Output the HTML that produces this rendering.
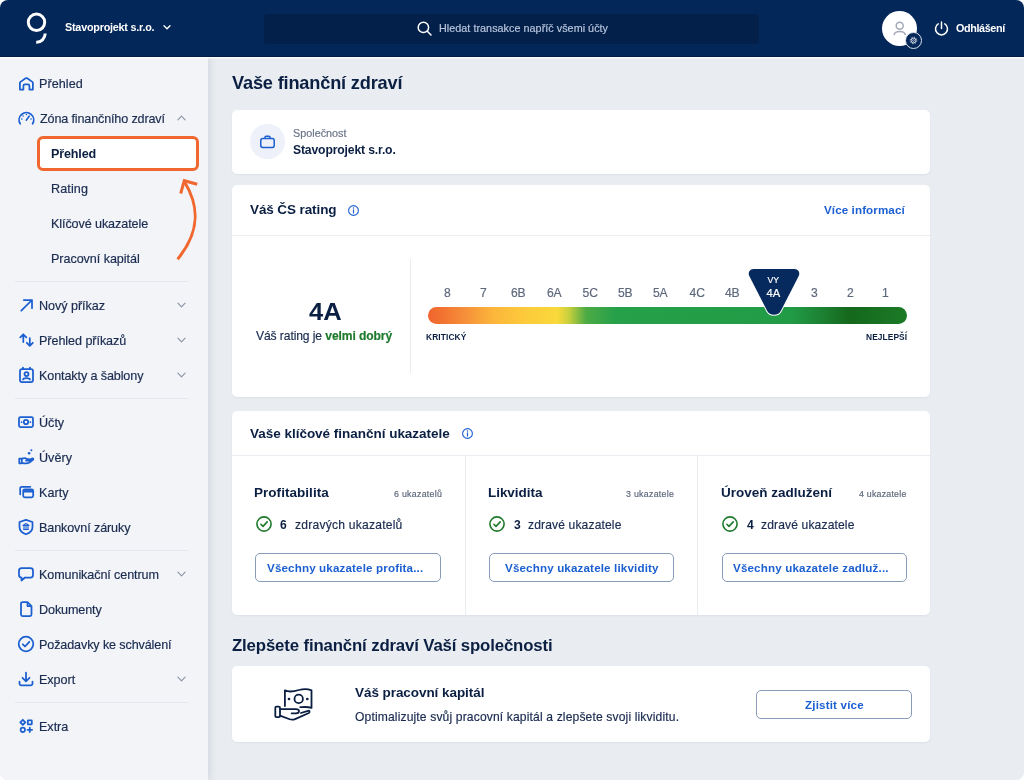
<!DOCTYPE html>
<html lang="cs">
<head>
<meta charset="utf-8">
<title>Vaše finanční zdraví</title>
<style>
*{box-sizing:border-box;margin:0;padding:0}
html,body{width:1024px;height:780px;overflow:hidden;background:#fff}
body{font-family:"Liberation Sans",sans-serif;color:#0b1f42}
.app{position:absolute;left:0;top:0;width:1024px;height:780px;border-radius:8px;overflow:hidden;background:#e9edf1}
.abs{position:absolute}
.tx{position:absolute;white-space:nowrap;z-index:6;will-change:transform}
.hdr{position:absolute;left:0;top:0;width:1024px;height:56.500px;background:#032758;border-bottom:1px solid #021c44;box-shadow:0 1.500px 0 rgba(255,255,255,.75);z-index:5}
.search{position:absolute;left:264.300px;top:13.500px;width:495px;height:30px;border-radius:4px;background:#03204a}
.avatar{position:absolute;left:882px;top:10.5px;width:35px;height:35px;border-radius:50%;background:#fff}
.gear{position:absolute;left:904.700px;top:32.400px;width:17px;height:17px;border-radius:50%;background:#032758;border:1.2px solid #dfe5ef}
.side{position:absolute;left:0;top:57px;width:208px;height:723px;background:#f2f4f8;box-shadow:1px 0 8px rgba(30,50,90,.14);z-index:3}
svg.ic{position:absolute;left:16.600px;width:18px;height:18px;fill:none;stroke:#1b5fd0;stroke-width:1.750;stroke-linecap:round;stroke-linejoin:round;z-index:6}
svg.ch{position:absolute;left:176px;width:11px;height:8px;fill:none;stroke:#8b94a6;stroke-width:1.150;stroke-linecap:round;stroke-linejoin:round;z-index:6}
.dv{position:absolute;left:15px;width:173px;height:1px;background:#e4e7ee;z-index:6}
.act{position:absolute;left:37.4px;top:136.4px;width:161.700px;height:34.400px;border:3px solid #f0682f;border-radius:6px;background:#fff;z-index:5}
.card{position:absolute;left:232px;width:698px;background:#fff;border-radius:5px;box-shadow:0 1px 2px rgba(20,40,80,.06)}
.ln{position:absolute;background:#e9ecf1;z-index:6}
.btn{position:absolute;border:1.400px solid #8a9bb8;border-radius:5px;background:#fff}
</style>
</head>
<body>
<div class="app">
<div class="hdr">
  <svg class="abs" style="left:24px;top:10px" width="26" height="36" viewBox="0 0 26 36"><circle cx="12.5" cy="12.3" r="8.2" fill="none" stroke="#fff" stroke-width="3"/><path d="M21.2 23.6 A8.7 8.7 0 0 1 12.2 32.2" fill="none" stroke="#fff" stroke-width="3"/></svg>
  <svg class="abs" style="left:162px;top:24px" width="10" height="7" viewBox="0 0 10 7"><path d="M2 1.8 L5 4.8 L8 1.8" fill="none" stroke="#fff" stroke-width="1.4" stroke-linecap="round" stroke-linejoin="round"/></svg>
  <div class="search"></div>
  <svg class="abs" style="left:416px;top:19.5px" width="18" height="18" viewBox="0 0 18 18"><circle cx="7.4" cy="7.4" r="5.2" fill="none" stroke="#fff" stroke-width="1.5"/><path d="M11.3 11.3 L15 15" stroke="#fff" stroke-width="1.5" stroke-linecap="round"/></svg>
  <div class="avatar"></div>
  <svg class="abs" style="left:890.5px;top:18px" width="18" height="20" viewBox="0 0 18 20"><circle cx="8.7" cy="7.8" r="3.5" fill="none" stroke="#a2a9b6" stroke-width="1.5"/><path d="M3.2 16.6 C4.2 12.6 13.2 12.6 14.2 16.6" fill="none" stroke="#a2a9b6" stroke-width="1.5" stroke-linecap="round"/></svg>
  <div class="gear"></div>
  <svg class="abs" style="left:907.700px;top:35.400px" width="11" height="11" viewBox="0 0 11 11"><circle cx="5.5" cy="5.5" r="3.3" fill="none" stroke="#e3e8f0" stroke-width="1" stroke-dasharray="1.1 1.492"/><circle cx="5.5" cy="5.5" r="2.4" fill="none" stroke="#e3e8f0" stroke-width=".9"/><circle cx="5.5" cy="5.5" r=".9" fill="none" stroke="#e3e8f0" stroke-width=".7"/></svg>
  <svg class="abs" style="left:933.2px;top:20px" width="17" height="17" viewBox="0 0 17 17"><path d="M5.2 3.9 A6 6 0 1 0 11.8 3.9" fill="none" stroke="#fff" stroke-width="1.5" stroke-linecap="round"/><path d="M8.5 2 V8.4" stroke="#fff" stroke-width="1.5" stroke-linecap="round"/></svg>
</div>
<div class="tx" id="co" style="left:64.63px;top:19.00px;font-size:10.8px;line-height:16px;font-weight:700;color:#fff;letter-spacing:-0.222px;"><span>Stavoprojekt s.r.o.</span></div>
<div class="tx" id="ph" style="left:438.74px;top:20.00px;font-size:10.8px;line-height:16px;font-weight:400;color:#b9c6de;letter-spacing:0.030px;-webkit-text-stroke:.18px;"><span>Hledat transakce napříč všemi účty</span></div>
<div class="tx" id="lo" style="left:955.59px;top:20.00px;font-size:10.8px;line-height:16px;font-weight:700;color:#fff;letter-spacing:-0.380px;"><span>Odhlášení</span></div>
<div class="side"></div>
<div class="act"></div>
<div class="tx" id="s0" style="left:39.06px;top:75.00px;font-size:12.6px;line-height:18px;font-weight:400;color:#1a2b4f;letter-spacing:0.054px;-webkit-text-stroke:.18px;"><span>Přehled</span></div>
<svg class="ic" style="top:74px" viewBox="0 0 18 18"><path d="M2.9 9.2 Q2.9 8.4 3.5 7.9 L8.6 4.3 Q9.4 3.8 10.2 4.3 L15.3 7.9 Q15.9 8.4 15.9 9.2 V15.6 H12.4 V11.9 Q12.4 10.4 10.9 10.4 H7.9 Q6.4 10.4 6.4 11.9 V15.6 H2.9 Z"/></svg>
<div class="tx" id="s1" style="left:39.65px;top:110.00px;font-size:12.6px;line-height:18px;font-weight:400;color:#1a2b4f;letter-spacing:-0.151px;-webkit-text-stroke:.18px;"><span>Zóna finančního zdraví</span></div>
<svg class="ic" style="top:109px" viewBox="0 0 18 18"><path d="M3.2 14.8 A7.3 7.3 0 1 1 15.6 14.8"/><path d="M9.3 11.3 L12.3 7" stroke-width="1.5"/><path d="M4.7 10 H4.8 M6 7 H6.1 M9.4 5.5 H9.5 M14 10 H14.1" stroke-width="1.5"/></svg>
<svg class="ch" style="top:114px" viewBox="0 0 11 8"><path d="M1.9 5.8 L5.5 2.2 L9.1 5.8"/></svg>
<div class="tx" id="s2" style="left:51.16px;top:145.00px;font-size:12.6px;line-height:18px;font-weight:700;color:#0b1f42;letter-spacing:-0.173px;"><span>Přehled</span></div>
<div class="tx" id="s3" style="left:51.00px;top:180.00px;font-size:12.6px;line-height:18px;font-weight:400;color:#1a2b4f;letter-spacing:0.112px;-webkit-text-stroke:.18px;"><span>Rating</span></div>
<div class="tx" id="s4" style="left:50.98px;top:215.00px;font-size:12.6px;line-height:18px;font-weight:400;color:#1a2b4f;letter-spacing:-0.098px;-webkit-text-stroke:.18px;"><span>Klíčové ukazatele</span></div>
<div class="tx" id="s5" style="left:50.97px;top:250.00px;font-size:12.6px;line-height:18px;font-weight:400;color:#1a2b4f;letter-spacing:-0.058px;-webkit-text-stroke:.18px;"><span>Pracovní kapitál</span></div>
<div class="tx" id="s6" style="left:38.97px;top:297.00px;font-size:12.6px;line-height:18px;font-weight:400;color:#1a2b4f;letter-spacing:-0.042px;-webkit-text-stroke:.18px;"><span>Nový příkaz</span></div>
<svg class="ic" style="top:296px" viewBox="0 0 18 18"><path d="M4.3 14.7 L15 4 M6.8 4 H15 V12.2"/></svg>
<svg class="ch" style="top:301px" viewBox="0 0 11 8"><path d="M1.9 2.2 L5.5 5.8 L9.1 2.2"/></svg>
<div class="tx" id="s7" style="left:39.04px;top:332.00px;font-size:12.6px;line-height:18px;font-weight:400;color:#1a2b4f;letter-spacing:-0.065px;-webkit-text-stroke:.18px;"><span>Přehled příkazů</span></div>
<svg class="ic" style="top:331px" viewBox="0 0 18 18"><path d="M6.3 11 V3.3 M3.3 6.3 L6.3 3.3 L9.3 6.3 M12.8 7 V14.8 M9.8 11.8 L12.8 14.8 L15.8 11.8"/></svg>
<svg class="ch" style="top:336px" viewBox="0 0 11 8"><path d="M1.9 2.2 L5.5 5.8 L9.1 2.2"/></svg>
<div class="tx" id="s8" style="left:38.89px;top:367.00px;font-size:12.6px;line-height:18px;font-weight:400;color:#1a2b4f;letter-spacing:-0.116px;-webkit-text-stroke:.18px;"><span>Kontakty a šablony</span></div>
<svg class="ic" style="top:366px" viewBox="0 0 18 18"><rect x="3" y="3" width="13" height="13" rx="2"/><path d="M6 1.5 V3 M13 1.5 V3"/><circle cx="9.5" cy="8" r="2"/><path d="M6 13.5 C6.5 11.5 12.5 11.5 13 13.5"/></svg>
<svg class="ch" style="top:371px" viewBox="0 0 11 8"><path d="M1.9 2.2 L5.5 5.8 L9.1 2.2"/></svg>
<div class="tx" id="s9" style="left:39.32px;top:414.00px;font-size:12.6px;line-height:18px;font-weight:400;color:#1a2b4f;letter-spacing:-0.006px;-webkit-text-stroke:.18px;"><span>Účty</span></div>
<svg class="ic" style="top:413px" viewBox="0 0 18 18"><rect x="2" y="4" width="14" height="10" rx="1.5"/><circle cx="9" cy="9" r="2.2"/><path d="M4.6 9 H4.7 M13.3 9 H13.4"/></svg>
<div class="tx" id="s10" style="left:39.08px;top:449.00px;font-size:12.6px;line-height:18px;font-weight:400;color:#1a2b4f;letter-spacing:0.012px;-webkit-text-stroke:.18px;"><span>Úvěry</span></div>
<svg class="ic" style="top:448px" viewBox="0 0 18 18"><circle cx="14.4" cy="2.3" r="1" fill="#1b5fd0" stroke="none"/><circle cx="12.1" cy="5.3" r="1.3" fill="#1b5fd0" stroke="none"/><path d="M2.3 10.5 H4.8 V15.3 H2.3 Z M4.8 11 C7 9.5 8.5 10 10 11 H12 C13 11 13 12.5 12 12.5 H9 M12.5 12 L15 10.5 C16 10 16.8 11 16 11.8 L12 14.8 C10 15.8 7 15.3 4.8 14.8"/></svg>
<div class="tx" id="s11" style="left:38.98px;top:484.00px;font-size:12.6px;line-height:18px;font-weight:400;color:#1a2b4f;letter-spacing:0.050px;-webkit-text-stroke:.18px;"><span>Karty</span></div>
<svg class="ic" style="top:483px" viewBox="0 0 18 18"><path d="M3.2 11.3 V5.3 A1.5 1.5 0 0 1 4.7 3.8 H13.3"/><rect x="6.2" y="6.3" width="10" height="8" rx="1.6"/><path d="M6.2 8.3 H16.2" stroke-width="2.4" stroke-linecap="butt"/></svg>
<div class="tx" id="s12" style="left:38.90px;top:519.00px;font-size:12.6px;line-height:18px;font-weight:400;color:#1a2b4f;letter-spacing:-0.117px;-webkit-text-stroke:.18px;"><span>Bankovní záruky</span></div>
<svg class="ic" style="top:518px" viewBox="0 0 18 18"><path d="M9 1.8 L15.5 4 V9 C15.5 12.5 12.5 15 9 16.3 C5.5 15 2.5 12.5 2.5 9 V4 Z"/><path d="M6.5 11.5 H11.5 M7 11 V8 M9 11 V8 M11 11 V8 M6 7.5 L9 5.5 L12 7.5 Z" stroke-width="1.1"/></svg>
<div class="tx" id="s13" style="left:38.90px;top:566.00px;font-size:12.6px;line-height:18px;font-weight:400;color:#1a2b4f;letter-spacing:-0.102px;-webkit-text-stroke:.18px;"><span>Komunikační centrum</span></div>
<svg class="ic" style="top:565px" viewBox="0 0 18 18"><path d="M4.5 3 H13.5 A2.5 2.5 0 0 1 16 5.5 V10 A2.5 2.5 0 0 1 13.5 12.5 H8 L4.5 15.5 V12.5 A2.5 2.5 0 0 1 2 10 V5.5 A2.5 2.5 0 0 1 4.5 3 Z"/></svg>
<svg class="ch" style="top:570px" viewBox="0 0 11 8"><path d="M1.9 2.2 L5.5 5.8 L9.1 2.2"/></svg>
<div class="tx" id="s14" style="left:39.06px;top:601.00px;font-size:12.6px;line-height:18px;font-weight:400;color:#1a2b4f;letter-spacing:-0.111px;-webkit-text-stroke:.18px;"><span>Dokumenty</span></div>
<svg class="ic" style="top:600px" viewBox="0 0 18 18"><path d="M4 3.5 A1.5 1.5 0 0 1 5.5 2 H10.5 L14.5 6 V14.5 A1.5 1.5 0 0 1 13 16 H5.5 A1.5 1.5 0 0 1 4 14.5 Z M10.5 2 V6 H14.5"/></svg>
<div class="tx" id="s15" style="left:38.92px;top:636.00px;font-size:12.6px;line-height:18px;font-weight:400;color:#1a2b4f;letter-spacing:-0.122px;-webkit-text-stroke:.18px;"><span>Požadavky ke schválení</span></div>
<svg class="ic" style="top:635px" viewBox="0 0 18 18"><circle cx="9" cy="9" r="7.3"/><path d="M5.8 9.3 L8 11.5 L12.3 6.8"/></svg>
<div class="tx" id="s16" style="left:39.01px;top:671.00px;font-size:12.6px;line-height:18px;font-weight:400;color:#1a2b4f;letter-spacing:-0.050px;-webkit-text-stroke:.18px;"><span>Export</span></div>
<svg class="ic" style="top:670px" viewBox="0 0 18 18"><path d="M9 2.5 V11 M5.5 7.8 L9 11.3 L12.5 7.8 M2.5 11.5 V13.5 A1.8 1.8 0 0 0 4.3 15.3 H13.7 A1.8 1.8 0 0 0 15.5 13.5 V11.5"/></svg>
<svg class="ch" style="top:675px" viewBox="0 0 11 8"><path d="M1.9 2.2 L5.5 5.8 L9.1 2.2"/></svg>
<div class="tx" id="s17" style="left:39.04px;top:718.00px;font-size:12.6px;line-height:18px;font-weight:400;color:#1a2b4f;letter-spacing:-0.034px;-webkit-text-stroke:.18px;"><span>Extra</span></div>
<svg class="ic" style="top:717px" viewBox="0 0 18 18"><path d="M5.8 2.8 L8.3 5.3 L5.8 7.8 L3.3 5.3 Z"/><rect x="10.8" y="3.3" width="4" height="4" rx=".4"/><circle cx="5.8" cy="12.8" r="2.2"/><path d="M12.8 10.5 V15.1 M10.5 12.8 H15.1"/></svg>
<div class="dv" style="top:281px"></div>
<div class="dv" style="top:398px"></div>
<div class="dv" style="top:550px"></div>
<div class="dv" style="top:702px"></div>
<svg class="abs" style="left:168px;top:175px;z-index:6" width="36" height="90" viewBox="0 0 36 90"><path d="M9.6 84.2 C32 57 32 32 16.3 6.5" fill="none" stroke="#f0682f" stroke-width="3"/><path d="M12.7 18.5 L16.3 5.7 L29.2 9.3" fill="none" stroke="#f0682f" stroke-width="3" stroke-linejoin="miter"/></svg>
<div class="tx" id="h1" style="left:232.25px;top:71.00px;font-size:18.2px;line-height:24px;font-weight:700;color:#0b1f42;letter-spacing:-0.178px;"><span>Vaše finanční zdraví</span></div>
<div class="card" style="top:109.5px;height:64px"></div>
<div class="abs" style="left:250.3px;top:124.4px;width:34.400px;height:34.400px;border-radius:50%;background:#eef1fa"></div>
<svg class="abs" style="left:259.2px;top:133.5px" width="17" height="15" viewBox="0 0 17 15"><rect x="1.8" y="4.6" width="13.4" height="8.8" rx="1.8" fill="none" stroke="#1b5fd0" stroke-width="1.5"/><path d="M6 4.4 V3.2 A1 1 0 0 1 7 2.2 H10 A1 1 0 0 1 11 3.2 V4.4" fill="none" stroke="#1b5fd0" stroke-width="1.5"/></svg>
<div class="tx" id="spol" style="left:293.40px;top:125.00px;font-size:10.8px;line-height:16px;font-weight:400;color:#687386;letter-spacing:0.011px;-webkit-text-stroke:.18px;"><span>Společnost</span></div>
<div class="tx" id="stavo" style="left:293.31px;top:141.00px;font-size:12.2px;line-height:18px;font-weight:700;color:#0b1f42;letter-spacing:-0.160px;"><span>Stavoprojekt s.r.o.</span></div>
<div class="card" style="top:185px;height:212px"></div>
<div class="tx" id="cs" style="left:249.78px;top:200.00px;font-size:13.5px;line-height:19px;font-weight:700;color:#0b1f42;letter-spacing:-0.105px;"><span>Váš ČS rating</span></div>
<svg class="abs" style="left:346.8px;top:203.5px" width="13" height="13" viewBox="0 0 13 13"><circle cx="6.5" cy="6.5" r="4.9" fill="none" stroke="#1b5fd0" stroke-width="1.1"/><path d="M6.5 5.9 V8.9" stroke="#1b5fd0" stroke-width="1.2" stroke-linecap="round"/><circle cx="6.5" cy="4.1" r=".75" fill="#1b5fd0"/></svg>
<div class="tx" id="vice" style="left:824.43px;top:202.00px;font-size:11.6px;line-height:16px;font-weight:700;color:#1b5fd0;letter-spacing:0.109px;"><span>Více informací</span></div>
<div class="ln" style="left:232px;top:235px;width:698px;height:1px"></div>
<div class="ln" style="left:410px;top:259px;width:1px;height:114px"></div>
<div class="tx" id="big" style="left:308.63px;top:297.00px;font-size:23.5px;line-height:30px;font-weight:700;color:#0b1f42;letter-spacing:0.000px;transform:scaleX(1.088);transform-origin:0 0;"><span>4A</span></div>
<div class="tx" id="rat" style="left:255.75px;top:327.00px;font-size:12.1px;line-height:18px;font-weight:400;color:#1a2b4f;letter-spacing:-0.096px;-webkit-text-stroke:.18px;"><span>Váš rating je <b style="color:#1e7a2c">velmi dobrý</b></span></div>
<div class="tx" id="l0" style="left:424.32px;width:46.60px;text-align:center;top:284.00px;font-size:12.1px;line-height:18px;font-weight:400;color:#5d687c;letter-spacing:0.000px;-webkit-text-stroke:.18px;"><span>8</span></div>
<div class="tx" id="l1" style="left:460.32px;width:46.60px;text-align:center;top:284.00px;font-size:12.1px;line-height:18px;font-weight:400;color:#5d687c;letter-spacing:0.000px;-webkit-text-stroke:.18px;"><span>7</span></div>
<div class="tx" id="l2" style="left:491.48px;width:54.60px;text-align:center;top:284.00px;font-size:12.1px;line-height:18px;font-weight:400;color:#5d687c;letter-spacing:0.000px;-webkit-text-stroke:.18px;"><span>6B</span></div>
<div class="tx" id="l3" style="left:527.18px;width:54.60px;text-align:center;top:284.00px;font-size:12.1px;line-height:18px;font-weight:400;color:#5d687c;letter-spacing:0.000px;-webkit-text-stroke:.18px;"><span>6A</span></div>
<div class="tx" id="l4" style="left:562.50px;width:54.60px;text-align:center;top:284.00px;font-size:12.1px;line-height:18px;font-weight:400;color:#5d687c;letter-spacing:0.000px;-webkit-text-stroke:.18px;"><span>5C</span></div>
<div class="tx" id="l5" style="left:598.43px;width:54.60px;text-align:center;top:284.00px;font-size:12.1px;line-height:18px;font-weight:400;color:#5d687c;letter-spacing:0.000px;-webkit-text-stroke:.18px;"><span>5B</span></div>
<div class="tx" id="l6" style="left:633.14px;width:54.60px;text-align:center;top:284.00px;font-size:12.1px;line-height:18px;font-weight:400;color:#5d687c;letter-spacing:0.000px;-webkit-text-stroke:.18px;"><span>5A</span></div>
<div class="tx" id="l7" style="left:669.76px;width:54.60px;text-align:center;top:284.00px;font-size:12.1px;line-height:18px;font-weight:400;color:#5d687c;letter-spacing:0.000px;-webkit-text-stroke:.18px;"><span>4C</span></div>
<div class="tx" id="l8" style="left:704.66px;width:54.60px;text-align:center;top:284.00px;font-size:12.1px;line-height:18px;font-weight:400;color:#5d687c;letter-spacing:0.000px;-webkit-text-stroke:.18px;"><span>4B</span></div>
<div class="tx" id="l9" style="left:791.28px;width:46.60px;text-align:center;top:284.00px;font-size:12.1px;line-height:18px;font-weight:400;color:#5d687c;letter-spacing:0.000px;-webkit-text-stroke:.18px;"><span>3</span></div>
<div class="tx" id="l10" style="left:827.32px;width:46.60px;text-align:center;top:284.00px;font-size:12.1px;line-height:18px;font-weight:400;color:#5d687c;letter-spacing:0.000px;-webkit-text-stroke:.18px;"><span>2</span></div>
<div class="tx" id="l11" style="left:862.17px;width:46.60px;text-align:center;top:284.00px;font-size:12.1px;line-height:18px;font-weight:400;color:#5d687c;letter-spacing:0.000px;-webkit-text-stroke:.18px;"><span>1</span></div>
<div class="abs" style="left:427.5px;top:307px;width:479.500px;height:17px;border-radius:9px;background:linear-gradient(90deg,#f0652e 0%,#f27331 3%,#f6913a 8%,#fbb53b 13.5%,#fdca3b 20%,#f9d93a 27%,#c5cf3d 29.5%,#4dab45 33%,#27a04a 39%,#229b46 76%,#1c8233 82%,#15681c 88%,#1b7a26 100%)"></div>
<svg class="abs" style="left:743px;top:264px;z-index:6" width="62" height="56" viewBox="0 0 62 56"><clipPath id="cp"><rect x="0" y="42.8" width="62" height="14"/></clipPath><path clip-path="url(#cp)" d="M55.73 11.91 L38.03 46.50 A7.90 7.90 0 0 1 23.97 46.50 L6.27 11.91" fill="none" stroke="#fff" stroke-width="2"/><path d="M10.50 5 H51.50 A4.75 4.75 0 0 1 55.73 11.91 L38.03 46.50 A7.90 7.90 0 0 1 23.97 46.50 L6.27 11.91 A4.75 4.75 0 0 1 10.50 5 Z" fill="#062a5e"/></svg>
<div class="tx" id="vy" style="left:748.02px;width:50.70px;text-align:center;top:273.00px;font-size:8.8px;line-height:14px;font-weight:400;color:#fff;letter-spacing:0.000px;-webkit-text-stroke:.18px;"><span>VY</span></div>
<div class="tx" id="m4a" style="left:745.92px;width:54.50px;text-align:center;top:285.00px;font-size:11.2px;line-height:16px;font-weight:400;color:#fff;letter-spacing:0.000px;-webkit-text-stroke:.18px;"><span>4A</span></div>
<div class="tx" id="krit" style="left:426.46px;top:330.00px;font-size:8.4px;line-height:14px;font-weight:700;color:#0b1f42;letter-spacing:0.105px;"><span>KRITICKÝ</span></div>
<div class="tx" id="nej" style="right:116.59px;top:330.00px;font-size:8.4px;line-height:14px;font-weight:700;color:#0b1f42;letter-spacing:0.088px;"><span>NEJLEPŠÍ</span></div>
<div class="card" style="top:411.200px;height:204.200px"></div>
<div class="tx" id="kl" style="left:250.37px;top:424.00px;font-size:13.5px;line-height:19px;font-weight:700;color:#0b1f42;letter-spacing:-0.019px;"><span>Vaše klíčové finanční ukazatele</span></div>
<svg class="abs" style="left:461px;top:427px" width="13" height="13" viewBox="0 0 13 13"><circle cx="6.5" cy="6.5" r="4.9" fill="none" stroke="#1b5fd0" stroke-width="1.1"/><path d="M6.5 5.9 V8.9" stroke="#1b5fd0" stroke-width="1.2" stroke-linecap="round"/><circle cx="6.5" cy="4.1" r=".75" fill="#1b5fd0"/></svg>
<div class="ln" style="left:232px;top:455px;width:698px;height:1px"></div>
<div class="ln" style="left:464.700px;top:456px;width:1px;height:159.500px"></div>
<div class="ln" style="left:697.300px;top:456px;width:1px;height:159.500px"></div>
<div class="tx" id="ct0" style="left:254.36px;top:483.00px;font-size:13.5px;line-height:19px;font-weight:700;color:#0b1f42;letter-spacing:0.039px;"><span>Profitabilita</span></div>
<div class="tx" id="cn0" style="right:582.24px;top:487.00px;font-size:8.8px;line-height:14px;font-weight:400;color:#5d687c;letter-spacing:0.287px;-webkit-text-stroke:.18px;"><span>6 ukazatelů</span></div>
<svg class="abs" style="left:254.8px;top:515.2px" width="18" height="18" viewBox="0 0 18 18"><circle cx="9" cy="9" r="7.1" fill="none" stroke="#1e7a2c" stroke-width="1.6"/><path d="M5.9 9.3 L8 11.4 L12.2 6.9" fill="none" stroke="#1e7a2c" stroke-width="1.6" stroke-linecap="round" stroke-linejoin="round"/></svg>
<div class="tx" id="n0" style="left:280.07px;top:516.00px;font-size:12.1px;line-height:18px;font-weight:700;color:#0b1f42;letter-spacing:0.000px;"><span>6</span></div>
<div class="tx" id="hl0" style="left:294.65px;top:516.00px;font-size:12.1px;line-height:18px;font-weight:400;color:#1a2b4f;letter-spacing:0.222px;-webkit-text-stroke:.18px;"><span>zdravých ukazatelů</span></div>
<div class="btn" style="left:255.2px;top:553.3px;width:185.9px;height:28.900px"></div>
<div class="tx" id="b0" style="left:267.42px;top:560.00px;font-size:11.6px;line-height:16px;font-weight:700;color:#1b5fd0;letter-spacing:0.151px;"><span>Všechny ukazatele profita...</span></div>
<div class="tx" id="ct1" style="left:488.35px;top:483.00px;font-size:13.5px;line-height:19px;font-weight:700;color:#0b1f42;letter-spacing:-0.047px;"><span>Likvidita</span></div>
<div class="tx" id="cn1" style="right:349.77px;top:487.00px;font-size:8.8px;line-height:14px;font-weight:400;color:#5d687c;letter-spacing:0.290px;-webkit-text-stroke:.18px;"><span>3 ukazatele</span></div>
<svg class="abs" style="left:488.3px;top:515.2px" width="18" height="18" viewBox="0 0 18 18"><circle cx="9" cy="9" r="7.1" fill="none" stroke="#1e7a2c" stroke-width="1.6"/><path d="M5.9 9.3 L8 11.4 L12.2 6.9" fill="none" stroke="#1e7a2c" stroke-width="1.6" stroke-linecap="round" stroke-linejoin="round"/></svg>
<div class="tx" id="n1" style="left:513.94px;top:516.00px;font-size:12.1px;line-height:18px;font-weight:700;color:#0b1f42;letter-spacing:0.000px;"><span>3</span></div>
<div class="tx" id="hl1" style="left:527.82px;top:516.00px;font-size:12.1px;line-height:18px;font-weight:400;color:#1a2b4f;letter-spacing:0.130px;-webkit-text-stroke:.18px;"><span>zdravé ukazatele</span></div>
<div class="btn" style="left:488.7px;top:553.3px;width:185.2px;height:28.900px"></div>
<div class="tx" id="b1" style="left:505.22px;top:560.00px;font-size:11.6px;line-height:16px;font-weight:700;color:#1b5fd0;letter-spacing:0.153px;"><span>Všechny ukazatele likvidity</span></div>
<div class="tx" id="ct2" style="left:720.76px;top:483.00px;font-size:13.5px;line-height:19px;font-weight:700;color:#0b1f42;letter-spacing:-0.007px;"><span>Úroveň zadlužení</span></div>
<div class="tx" id="cn2" style="right:117.53px;top:487.00px;font-size:8.8px;line-height:14px;font-weight:400;color:#5d687c;letter-spacing:0.229px;-webkit-text-stroke:.18px;"><span>4 ukazatele</span></div>
<svg class="abs" style="left:720.9px;top:515.2px" width="18" height="18" viewBox="0 0 18 18"><circle cx="9" cy="9" r="7.1" fill="none" stroke="#1e7a2c" stroke-width="1.6"/><path d="M5.9 9.3 L8 11.4 L12.2 6.9" fill="none" stroke="#1e7a2c" stroke-width="1.6" stroke-linecap="round" stroke-linejoin="round"/></svg>
<div class="tx" id="n2" style="left:746.89px;top:516.00px;font-size:12.1px;line-height:18px;font-weight:700;color:#0b1f42;letter-spacing:0.000px;"><span>4</span></div>
<div class="tx" id="hl2" style="left:761.42px;top:516.00px;font-size:12.1px;line-height:18px;font-weight:400;color:#1a2b4f;letter-spacing:0.130px;-webkit-text-stroke:.18px;"><span>zdravé ukazatele</span></div>
<div class="btn" style="left:721.6px;top:553.3px;width:185.1px;height:28.900px"></div>
<div class="tx" id="b2" style="left:732.88px;top:560.00px;font-size:11.6px;line-height:16px;font-weight:700;color:#1b5fd0;letter-spacing:0.158px;"><span>Všechny ukazatele zadluž...</span></div>
<div class="tx" id="h2" style="left:231.91px;top:634.00px;font-size:16.8px;line-height:23px;font-weight:700;color:#0b1f42;letter-spacing:-0.145px;"><span>Zlepšete finanční zdraví Vaší společnosti</span></div>
<div class="card" style="top:666.300px;height:75.600px"></div>
<svg class="abs" style="left:272px;top:686px" width="44" height="38" viewBox="0 0 44 38" fill="none" stroke="#0b1f42" stroke-width="1.8" stroke-linecap="round" stroke-linejoin="round"><path d="M12.9 20 V4.3 C16 6 22 5.5 27 4 S35 2.5 39.5 4.3 V21.9 C36 20.5 32 21 28.3 21.2"/><circle cx="26.7" cy="12.9" r="4.2"/><circle cx="17" cy="13" r="1.350" fill="#0b1f42" stroke="none"/><circle cx="35.3" cy="13" r="1.350" fill="#0b1f42" stroke="none"/><rect x="3.3" y="20.6" width="4.7" height="10.6" rx="1.2"/><path d="M8 23.2 H24 C28 23.2 28 27.3 24 27.3 H19.6"/><path d="M28.9 27 L36 24.8 C37.5 24.3 38.2 26.2 36.8 27 L23.1 33.1 C21 34 19 33.8 17 33 L8 29.6"/></svg>
<div class="tx" id="wc" style="left:354.69px;top:683.00px;font-size:13.5px;line-height:19px;font-weight:700;color:#0b1f42;letter-spacing:-0.062px;"><span>Váš pracovní kapitál</span></div>
<div class="tx" id="opt" style="left:354.62px;top:708.00px;font-size:12.1px;line-height:18px;font-weight:400;color:#1a2b4f;letter-spacing:0.141px;-webkit-text-stroke:.18px;"><span>Optimalizujte svůj pracovní kapitál a zlepšete svoji likviditu.</span></div>
<div class="btn" style="left:756px;top:690.200px;width:155.800px;height:28.600px"></div>
<div class="tx" id="zj" style="left:804.70px;top:697.00px;font-size:11.6px;line-height:16px;font-weight:700;color:#1b5fd0;letter-spacing:0.172px;"><span>Zjistit více</span></div>
</div>
</body>
</html>
